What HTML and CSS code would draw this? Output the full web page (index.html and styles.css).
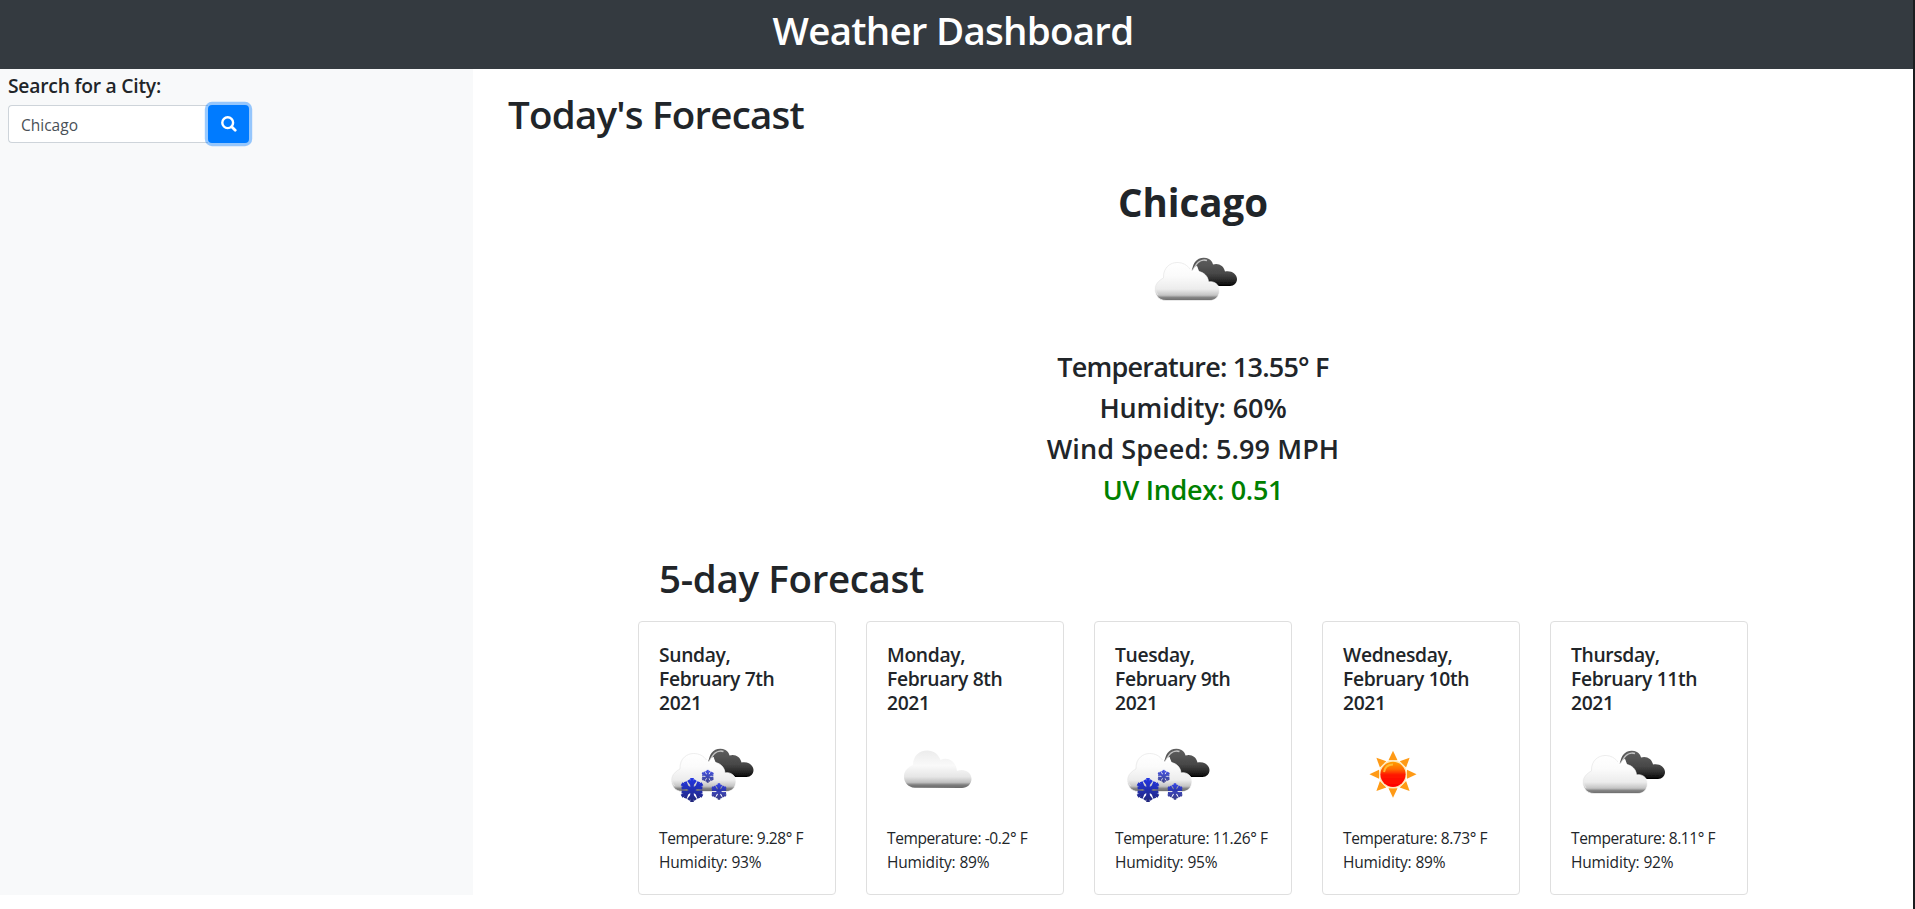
FILE: index.html
```
<!DOCTYPE html>
<html lang="en">
<head>
<meta charset="utf-8">
<title>Weather Dashboard</title>
<link rel="stylesheet" href="styles.css">
</head>
<body>
<svg class="sprite" aria-hidden="true">
  <defs>
    <linearGradient id="whiteFill" x1="0" y1="0" x2="0" y2="1">
      <stop offset="0" stop-color="#fff"/><stop offset=".35" stop-color="#fbfbfb"/><stop offset=".7" stop-color="#ececec"/><stop offset=".86" stop-color="#c4c4c4"/><stop offset=".92" stop-color="#858585"/><stop offset="1" stop-color="#6a6a6a"/>
    </linearGradient>
    <linearGradient id="greyFill" x1="0" y1="0" x2="0" y2="1">
      <stop offset="0" stop-color="#ececec"/><stop offset=".4" stop-color="#f9f9f9"/><stop offset=".7" stop-color="#e6e6e6"/><stop offset=".85" stop-color="#c0c0c0"/><stop offset=".92" stop-color="#7c7c7c"/><stop offset="1" stop-color="#6a6a6a"/>
    </linearGradient>
    <linearGradient id="darkFill" x1="0" y1="0" x2="0" y2="1">
      <stop offset="0" stop-color="#606060"/><stop offset=".55" stop-color="#484848"/><stop offset=".8" stop-color="#292929"/><stop offset="1" stop-color="#000"/>
    </linearGradient>
    <linearGradient id="sunFill" x1="0" y1="0" x2="0" y2="1">
      <stop offset="0" stop-color="#ffa000"/><stop offset=".3" stop-color="#ff6a00"/><stop offset=".52" stop-color="#ff1800"/><stop offset="1" stop-color="#f00"/>
    </linearGradient>
    <linearGradient id="flakeFill" gradientUnits="userSpaceOnUse" x1="0" y1="-12" x2="0" y2="12">
      <stop offset="0" stop-color="#2436e8"/><stop offset="1" stop-color="#232778"/>
    </linearGradient>
    <filter id="soft" x="-10%" y="-10%" width="120%" height="120%"><feGaussianBlur stdDeviation=".7"/></filter>
  </defs>
  <symbol id="cloudPair" viewBox="0 0 100 100">
    <g filter="url(#soft)">
      <path d="M47 39C50 37 49 33 52 29C55 25 61 23.500 66 26C68 27 69.500 29 70 31.500C75 29.500 81 32.500 82 38.500C88 37 94 41 94 46C94 50 91 53 87 53H68L55 40L54 33Z" fill="url(#darkFill)"/>
      <path d="M49.500 37.500C52 35 52 32 55 29.500C57 27.500 61 26.500 64 27.500" fill="none" stroke="#c4c4c4" stroke-width="1.500"/>
      <path d="M47 40C51 38 50 34 54 33L56 38L64 53L48 47Z" fill="#fff"/>
      <path d="M23 67.500C15 67.500 11.500 61 11.500 55.500C12 50 16 47 20 44.500C19 35 26 29.500 34 29.500C42 29.500 47 34 49 39C57 36.500 65 41 65.500 49C71 47.500 77 52 76.500 58C76 64 72 67.500 67 67.500Z" fill="url(#whiteFill)" stroke="#fff" stroke-width=".7"/>
      <path d="M15 62C10 55 13 49 20.500 45C20 34 28 29.500 34 29.500C40 29.500 44 32 47 36" fill="none" stroke="#e8e8e8" stroke-width=".8"/>
    </g>
  </symbol>
  <symbol id="flake" viewBox="-12 -12 24 24">
    <g fill="none" stroke="url(#flakeFill)" stroke-width="3.400">
      <path d="M0-11.500Q.1 0 0 11.500M-10-6Q0 .1 10 6M10-6Q0 .1-10 6"/>
      <path stroke-width="2.900" d="M-3.500-9.500L0-5L3.500-9.500M-3.500 9.500L0 5L3.500 9.500M-10-2L-4.500-2.500L-6.500-8M10 2L4.500 2.500L6.500 8M10-2L4.500-2.500L6.500-8M-10 2L-4.500 2.500L-6.500 8"/>
    </g>
  </symbol>
  <symbol id="snow" viewBox="0 0 100 100">
    <use href="#cloudPair" x="0" y="-2" width="101" height="100"/>
    <g filter="url(#soft)">
      <use href="#flake" x="20.500" y="51.500" width="25" height="25"/>
      <use href="#flake" x="42" y="43.500" width="13.500" height="13.500" opacity=".85"/>
      <use href="#flake" x="51.500" y="57" width="17" height="17" opacity=".9"/>
    </g>
  </symbol>
  <symbol id="cloud" viewBox="0 0 100 100">
    <g filter="url(#soft)">
      <path d="M28 61.800C20 61.500 16.500 55 17 49.500C17.500 44.500 21 41 26 39C26 30 32 24.500 40 24.500C47 24.500 51 28 53.500 34C60 30.500 69 34.500 70 45C77 42 84.500 46 84.500 53C84.500 58 80 62 75 62Z" fill="url(#greyFill)"/>
    </g>
  </symbol>
  <symbol id="sun" viewBox="0 0 100 100">
    <g filter="url(#soft)">
      <g fill="#ff9a14" transform="translate(50 48.300)">
        <path id="ray" d="M0-23.500L4.500-14H-4.500Z"/>
        <use href="#ray" transform="rotate(45)"/><use href="#ray" transform="rotate(90)"/><use href="#ray" transform="rotate(135)"/><use href="#ray" transform="rotate(180)"/><use href="#ray" transform="rotate(225)"/><use href="#ray" transform="rotate(270)"/><use href="#ray" transform="rotate(315)"/>
      </g>
      <circle cx="50" cy="48.300" r="14" fill="#ffe9b8"/>
      <circle cx="50" cy="48.300" r="12.600" fill="url(#sunFill)"/>
      <path d="M41 46C42 40 46 38.500 50 38.500" fill="none" stroke="#ffc83c" stroke-width="2" opacity=".8"/>
    </g>
  </symbol>
</svg>

<div class="page">
  <header class="header"><h1 class="title">Weather Dashboard</h1></header>
  <div class="columns">
    <aside class="sidebar">
      <h5 class="label">Search for a City:</h5>
      <div class="search">
        <div class="field">Chicago</div>
        <button class="button" type="button" aria-label="Search">
          <svg width="16" height="16" viewBox="0 0 16 16" fill="none" stroke="#fff"><circle cx="6.700" cy="6.700" r="5.400" stroke-width="2.400"/><path d="M10.700 10.700L14.200 14.200" stroke-width="2.800" stroke-linecap="round"/></svg>
        </button>
      </div>
    </aside>
    <main class="main">
      <h1 class="today-title">Today's Forecast</h1>
      <section class="today">
        <h1 class="city">Chicago</h1>
        <svg class="weather"><use href="#cloudPair"/></svg>
        <h3 class="stat temp">Temperature: 13.55° F</h3>
        <h3 class="stat humid">Humidity: 60%</h3>
        <h3 class="stat wind">Wind Speed: 5.99 MPH</h3>
        <h3 class="stat uv">UV Index: 0.51</h3>
      </section>
      <section class="forecast">
        <h1 class="forecast-title">5-day Forecast</h1>
        <div class="cards">
          <article class="card"><h5 class="date">Sunday,<br>February 7th<br>2021</h5><svg class="weather"><use href="#snow"/></svg><p class="line">Temperature: 9.28° F</p><p class="line humidity">Humidity: 93%</p></article>
          <article class="card"><h5 class="date">Monday,<br>February 8th<br>2021</h5><svg class="weather"><use href="#cloud"/></svg><p class="line">Temperature: -0.2° F</p><p class="line humidity">Humidity: 89%</p></article>
          <article class="card"><h5 class="date">Tuesday,<br>February 9th<br>2021</h5><svg class="weather"><use href="#snow"/></svg><p class="line">Temperature: 11.26° F</p><p class="line humidity">Humidity: 95%</p></article>
          <article class="card"><h5 class="date">Wednesday,<br>February 10th<br>2021</h5><svg class="weather"><use href="#sun"/></svg><p class="line">Temperature: 8.73° F</p><p class="line humidity">Humidity: 89%</p></article>
          <article class="card"><h5 class="date">Thursday,<br>February 11th<br>2021</h5><svg class="weather"><use href="#cloudPair"/></svg><p class="line">Temperature: 8.11° F</p><p class="line humidity">Humidity: 92%</p></article>
        </div>
      </section>
    </main>
  </div>
</div>
</body>
</html>
```
FILE: styles.css
```
*, *::before, *::after { box-sizing: border-box; }
body {
  margin: 0;
  overflow: hidden;
  background: #fff;
  color: #212529;
  font: 400 15.5px/24px "Open Sans", "Noto Sans", sans-serif;
}
h1, h3, h5, p { margin: 0; white-space: nowrap; }
h1 { font-size: 38.5px; line-height: 48px; font-weight: 600; }
h3 { font-size: 27px; line-height: 33px; font-weight: 600; }
h5 { font-size: 19.3px; line-height: 24px; font-weight: 600; }
.sprite { position: absolute; width: 0; height: 0; }
.page { height: 909px; border-right: 2px solid #1b1d20; }
.header {
  height: 69px;
  padding-top: 6px;
  background: #343a40;
  color: #fff;
  text-align: center;
}
.title { padding-right: 7px; letter-spacing: -.75px; }
.columns { display: flex; height: 826px; }
.sidebar { flex: none; width: 473px; padding: 5px 8px; background: #f8f9fa; }
.label { letter-spacing: -.23px; }
.search { display: flex; margin-top: 7px; }
.field {
  width: 200px;
  height: 38px;
  padding: 7px 12px;
  border: 1px solid #ced4da;
  border-right: 0;
  border-radius: 4px 0 0 4px;
  background: #fff;
  color: #495057;
}
.button {
  display: flex;
  align-items: center;
  justify-content: center;
  width: 41px;
  height: 38px;
  padding: 0;
  border: 0;
  border-radius: 4px;
  background: #007bff;
  box-shadow: 0 0 0 3.2px rgba(0, 123, 255, .4);
}
.main { flex: 1; padding-top: 21px; }
.today-title { padding-left: 35px; letter-spacing: -.78px; }
.today { display: flex; flex-direction: column; align-items: center; margin-top: 40px; }
.city { font-weight: 700; margin-bottom: 7px; }
.weather { display: block; width: 100px; height: 100px; }
.today .weather { margin-bottom: 17px; }
.stat { margin-bottom: 8px; }
.temp { letter-spacing: -.78px; }
.humid { letter-spacing: -.12px; }
.wind { letter-spacing: .1px; }
.uv { color: #008000; letter-spacing: -.3px; }
.forecast { padding-left: 165px; margin-top: 40px; }
.forecast-title { padding-left: 21px; letter-spacing: -.33px; }
.cards { display: flex; gap: 30px; margin-top: 19px; }
.card {
  width: 198px;
  height: 274px;
  padding: 21px 20px 19px;
  border: 1px solid #dfdfdf;
  border-radius: 4px;
}
.date { margin-bottom: 11px; letter-spacing: -.35px; }
.line { letter-spacing: -.4px; }
.humidity { letter-spacing: -.16px; }
```
